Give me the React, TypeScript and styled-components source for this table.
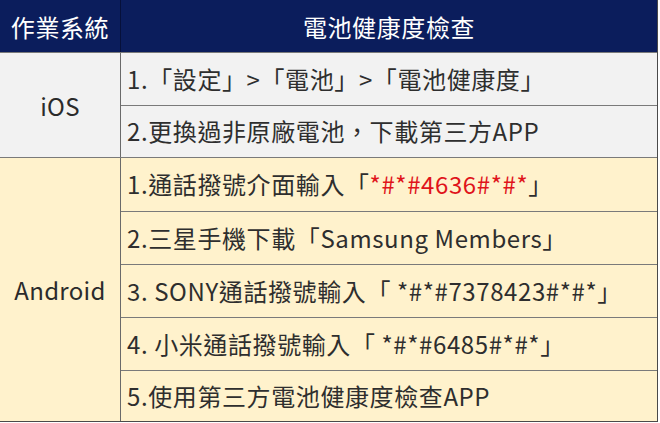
import React from "react";
import styled, { createGlobalStyle } from "styled-components";

const Global = createGlobalStyle`
  html, body { margin: 0; padding: 0; background: #ffffff; }
  body { font-family: "Noto Sans CJK TC", "Noto Sans", sans-serif; }
`;

const Table = styled.div`
  width: 658px;
  display: grid;
  grid-template-columns: 121px 1fr;
  border-right: 1px solid #4a4a4a;
  border-bottom: 1px solid #4a4a4a;
  box-sizing: border-box;
`;

const HeadCell = styled.div<{ $divider?: boolean }>`
  height: 52px;
  background: #0b1d5c;
  color: #ffffff;
  font-size: 24px;
  display: flex;
  align-items: center;
  justify-content: center;
  letter-spacing: 0.6px;
  border-right: ${(p) => (p.$divider ? "1px solid #06103a" : "none")};
`;

const Group = styled.div<{ $bg: string }>`
  grid-column: 1 / -1;
  display: grid;
  grid-template-columns: 121px 1fr;
  background: ${(p) => p.$bg};
  border-top: 1px solid #7a7a7a;
`;

const OsCell = styled.div`
  display: flex;
  align-items: center;
  justify-content: center;
  font-size: 24px;
  color: #2b2b2b;
  letter-spacing: 0.3px;
  border-right: 1px solid #6a6a6a;
`;

const Items = styled.div`
  display: flex;
  flex-direction: column;
`;

const Item = styled.div<{ $h: number }>`
  height: ${(p) => p.$h}px;
  display: flex;
  align-items: center;
  padding-left: 6px;
  padding-bottom: 2px;
  box-sizing: border-box;
  font-size: 24px;
  letter-spacing: 0.6px;
  color: #2e2e2e;
  white-space: nowrap;
  & + & {
    border-top: 1px solid #7a7a7a;
  }
`;

const Red = styled.span`
  color: #e0141b;
`;

export default function App() {
  return (
    <>
      <Global />
      <Table>
        <HeadCell $divider>作業系統</HeadCell>
        <HeadCell>電池健康度檢查</HeadCell>
        <Group $bg="#f2f2f2">
          <OsCell>iOS</OsCell>
          <Items>
            <Item $h={52}>1.「設定」&gt;「電池」&gt;「電池健康度」</Item>
            <Item $h={52}>2.更換過非原廠電池，下載第三方APP</Item>
          </Items>
        </Group>
        <Group $bg="#fff2cc">
          <OsCell>Android</OsCell>
          <Items>
            <Item $h={53}>
              1.通話撥號介面輸入「<Red>*#*#4636#*#*</Red>」
            </Item>
            <Item $h={53}>2.三星手機下載「Samsung Members」</Item>
            <Item $h={53}>3. SONY通話撥號輸入「 *#*#7378423#*#*」</Item>
            <Item $h={53}>4. 小米通話撥號輸入「 *#*#6485#*#*」</Item>
            <Item $h={51}>5.使用第三方電池健康度檢查APP</Item>
          </Items>
        </Group>
      </Table>
    </>
  );
}
